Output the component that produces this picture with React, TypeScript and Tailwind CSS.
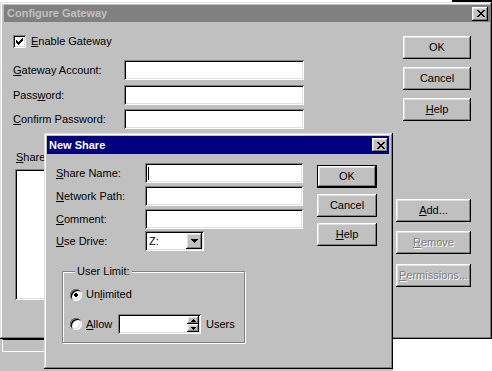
import type { ReactNode } from 'react';

// Win95 bevels
const RAISED =
  'shadow-[inset_-1px_-1px_0_#000,inset_1px_1px_0_#fff,inset_-2px_-2px_0_#808080,inset_2px_2px_0_#dfdfdf]';
const SUNKEN =
  'shadow-[inset_1px_1px_0_#808080,inset_-1px_-1px_0_#fff,inset_2px_2px_0_#000,inset_-2px_-2px_0_#dfdfdf]';
const FRAME =
  'shadow-[inset_-1px_-1px_0_#000,inset_1px_1px_0_#dfdfdf,inset_-2px_-2px_0_#808080,inset_2px_2px_0_#fff]';

const CLOSE_X = ['##....##', '.##..##.', '..####..', '...##...', '..####..', '.##..##.', '##....##'];
const CHECK = ['......#', '.....##', '#...###', '##.###.', '#####..', '.###...', '..#....'];
const DOWN = ['#######', '.#####.', '..###..', '...#...'];
const SPIN_UP = ['..#..', '.###.', '#####'];
const SPIN_DOWN = ['#####', '.###.', '..#..'];
const DOT = ['.##.', '####', '####', '.##.'];

function Pixels({ rows, color = '#000' }: { rows: string[]; color?: string }) {
  return (
    <svg width={rows[0].length} height={rows.length} shapeRendering="crispEdges" className="block">
      {rows.flatMap((r, y) =>
        r.split('').map((c, x) =>
          c === '#' ? <rect key={`${x}-${y}`} x={x} y={y} width={1} height={1} fill={color} /> : null,
        ),
      )}
    </svg>
  );
}

function CloseButton() {
  return (
    <div className={`flex h-[14px] w-[16px] items-center justify-center bg-[#c0c0c0] pl-[1px] ${RAISED}`}>
      <Pixels rows={CLOSE_X} />
    </div>
  );
}

function Button({
  children,
  className = '',
  disabled,
  isDefault,
}: {
  children: ReactNode;
  className?: string;
  disabled?: boolean;
  isDefault?: boolean;
}) {
  const text = disabled ? 'text-[#808080] [text-shadow:1px_1px_0_#fff]' : 'text-black';
  if (isDefault) {
    return (
      <div className={`h-[23px] border border-black ${className}`}>
        <div className={`flex h-full w-full items-center justify-center ${RAISED} ${text}`}>{children}</div>
      </div>
    );
  }
  return (
    <div className={`flex h-[23px] items-center justify-center ${RAISED} ${text} ${className}`}>{children}</div>
  );
}

function Field({ className = '', children }: { className?: string; children?: ReactNode }) {
  return <div className={`flex h-[20px] items-center bg-white ${SUNKEN} ${className}`}>{children}</div>;
}

function Radio({ checked }: { checked?: boolean }) {
  return (
    <div className={`flex h-[12px] w-[12px] shrink-0 items-center justify-center rounded-full bg-white ${SUNKEN}`}>
      {checked && <Pixels rows={DOT} />}
    </div>
  );
}

function OuterDialog() {
  return (
    <div className={`absolute left-0 top-[2px] flex h-[337px] w-[492px] flex-col bg-[#c0c0c0] pl-[4px] pr-[2px] pt-[3px] ${FRAME}`}>
      <div className="flex h-[17px] items-center justify-between bg-[#808080] pl-[3px] pr-[2px]">
        <span className="font-bold text-[#c0c0c0]">Configure Gateway</span>
        <CloseButton />
      </div>
      <div className="flex">
        <div className="ml-[9px] flex w-[372px] flex-col">
          <div className="mt-[13px] flex h-[13px] items-center">
            <div className={`flex h-[13px] w-[13px] items-center justify-center bg-white ${SUNKEN}`}>
              <Pixels rows={CHECK} />
            </div>
            <span className="ml-[5px]">
              <u>E</u>nable Gateway
            </span>
          </div>
          <div className="mt-[12px] flex items-center">
            <span className="w-[111px]">
              <u>G</u>ateway Account:
            </span>
            <Field className="w-[180px]" />
          </div>
          <div className="mt-[5px] flex items-center">
            <span className="w-[111px]">
              Pass<u>w</u>ord:
            </span>
            <Field className="w-[180px]" />
          </div>
          <div className="mt-[4px] flex items-center">
            <span className="w-[111px]">
              <u>C</u>onfirm Password:
            </span>
            <Field className="w-[180px]" />
          </div>
          <span className="ml-[3px] mt-[22px]">
            <u>S</u>hares:
          </span>
          <div className={`ml-[2px] mt-[5px] h-[131px] w-[370px] bg-white ${SUNKEN}`} />
        </div>
        <div className="ml-[11px] flex w-[75px] flex-col">
          <Button className="ml-[7px] mt-[14px] w-[68px]">OK</Button>
          <Button className="ml-[7px] mt-[8px] w-[68px]">Cancel</Button>
          <Button className="ml-[7px] mt-[8px] w-[68px]">
            <u>H</u>elp
          </Button>
          <Button className="mt-[78px] w-[75px]">
            <u>A</u>dd...
          </Button>
          <Button className="mt-[9px] w-[75px]" disabled>
            <u>R</u>emove
          </Button>
          <Button className="mt-[10px] w-[75px]" disabled>
            <u>P</u>ermissions...
          </Button>
        </div>
      </div>
    </div>
  );
}

function InnerDialog() {
  return (
    <div className={`absolute left-[44px] top-[133px] flex h-[236px] w-[349px] flex-col bg-[#c0c0c0] pl-[3px] pr-[4px] pt-[3px] ${FRAME}`}>
      <div className="flex h-[18px] items-center justify-between bg-[#000080] pl-[2px] pr-[1px]">
        <span className="font-bold text-white">New Share</span>
        <CloseButton />
      </div>
      <div className="flex">
        <div className="ml-[9px] flex w-[247px] flex-col">
          <div className="mt-[9px] flex items-center">
            <span className="w-[89px]">
              <u>S</u>hare Name:
            </span>
            <Field className="w-[158px]">
              <span className="ml-[3px] h-[13px] w-[1px] bg-black" />
            </Field>
          </div>
          <div className="mt-[3px] flex items-center">
            <span className="w-[89px]">
              <u>N</u>etwork Path:
            </span>
            <Field className="w-[158px]" />
          </div>
          <div className="mt-[3px] flex items-center">
            <span className="w-[89px]">
              <u>C</u>omment:
            </span>
            <Field className="w-[158px]" />
          </div>
          <div className="mt-[2px] flex items-center">
            <span className="w-[89px]">
              <u>U</u>se Drive:
            </span>
            <Field className="w-[59px] justify-between pl-[4px] pr-[2px]">
              <span>Z:</span>
              <div className={`flex h-[16px] w-[16px] items-center justify-center bg-[#c0c0c0] ${RAISED}`}>
                <Pixels rows={DOWN} />
              </div>
            </Field>
          </div>
          <fieldset className="ml-[6px] mt-[14px] w-[183px] border border-[#808080] pb-[8px] pl-[7px] shadow-[inset_1px_1px_0_#fff,1px_1px_0_#fff]">
            <legend className="ml-[5px] bg-[#c0c0c0] px-[2px]">User Limit:</legend>
            <div className="mt-[10px] flex h-[13px] items-center">
              <Radio checked />
              <span className="ml-[4px]">
                Un<u>l</u>imited
              </span>
            </div>
            <div className="mt-[13px] flex items-center">
              <div className="flex w-[48px] items-center">
                <Radio />
                <span className="ml-[4px]">
                  <u>A</u>llow
                </span>
              </div>
              <Field className="w-[83px] justify-end pr-[2px]">
                <div className="flex flex-col">
                  <div className={`flex h-[8px] w-[12px] items-center justify-center bg-[#c0c0c0] ${RAISED}`}>
                    <Pixels rows={SPIN_UP} />
                  </div>
                  <div className={`flex h-[8px] w-[12px] items-center justify-center bg-[#c0c0c0] ${RAISED}`}>
                    <Pixels rows={SPIN_DOWN} />
                  </div>
                </div>
              </Field>
              <span className="ml-[5px]">Users</span>
            </div>
          </fieldset>
        </div>
        <div className="ml-[14px] flex w-[60px] flex-col">
          <Button className="mt-[11px] w-[60px]" isDefault>
            OK
          </Button>
          <Button className="mt-[6px] w-[60px]">Cancel</Button>
          <Button className="mt-[6px] w-[60px]">
            <u>H</u>elp
          </Button>
        </div>
      </div>
    </div>
  );
}

export default function App() {
  return (
    <div className="relative h-[371px] w-[492px] overflow-hidden bg-[#c0c0c0] font-['Liberation_Sans',Arial,sans-serif] text-[11px] leading-[13px] text-black">
      <div className="absolute left-0 top-0 h-[2px] w-full bg-white" />
      <div className="absolute left-[452px] top-0 h-[2px] w-[40px] bg-black" />
      <OuterDialog />
      <div className="absolute left-[2px] top-[339px] h-[13px] w-[42px] border-b border-l border-t border-b-white border-l-white border-t-black" />
      <div className="absolute left-[393px] top-[339px] h-[32px] w-[99px] bg-white" />
      <InnerDialog />
    </div>
  );
}
